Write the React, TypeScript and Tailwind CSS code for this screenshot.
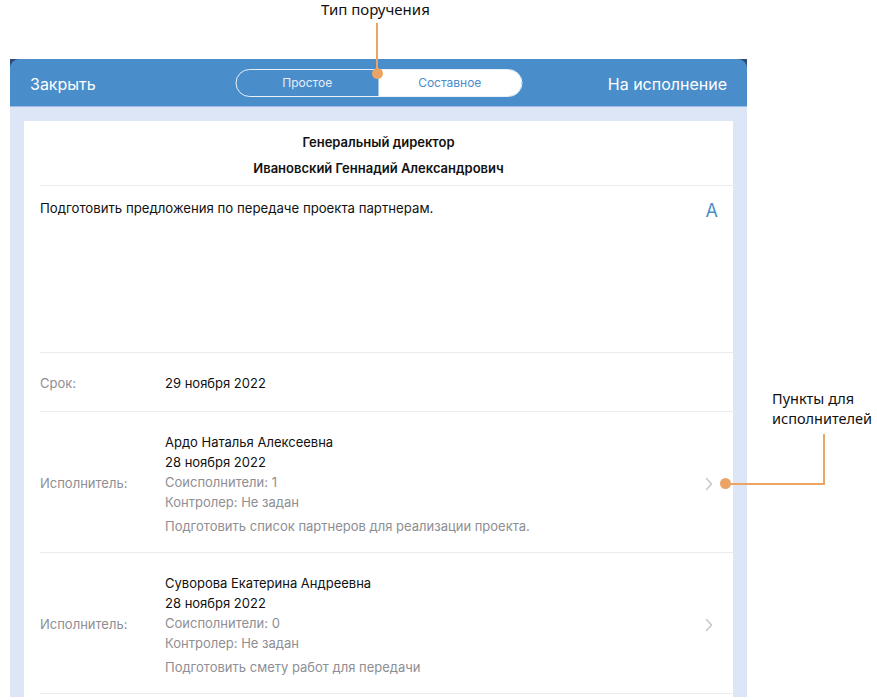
import React from "react";

const ui = "font-['Inter','Liberation_Sans',sans-serif]";
const note = "font-['Noto_Sans','Open_Sans',sans-serif]";

type Executor = {
  name: string;
  date: string;
  co: number;
  desc: string;
};

const executors: Executor[] = [
  {
    name: "Ардо Наталья Алексеевна",
    date: "28 ноября 2022",
    co: 1,
    desc: "Подготовить список партнеров для реализации проекта.",
  },
  {
    name: "Суворова Екатерина Андреевна",
    date: "28 ноября 2022",
    co: 0,
    desc: "Подготовить смету работ для передачи",
  },
];

function Chevron() {
  return (
    <svg width="8" height="14" viewBox="0 0 8 14" className="shrink-0">
      <path d="M1.5 1.5 L6.5 7 L1.5 12.5" fill="none" stroke="#c7c7cc" strokeWidth="1.5" strokeLinecap="round" strokeLinejoin="round" />
    </svg>
  );
}

function ExecutorRow({ ex }: { ex: Executor }) {
  return (
    <div className="flex items-center border-b border-[#ebebef] pt-[20px] pb-[16px] pr-[20px]">
      <div className="w-[125px] shrink-0 text-[13px] text-[#8e8e93]">Исполнитель:</div>
      <div className="flex-1 text-[13px] leading-[20px]">
        <div className="text-[#111]">{ex.name}</div>
        <div className="text-[#111]">{ex.date}</div>
        <div className="text-[#8e8e93]">Соисполнители: {ex.co}</div>
        <div className="text-[#8e8e93]">Контролер: Не задан</div>
        <div className="mt-[4px] text-[#8e8e93]">{ex.desc}</div>
      </div>
      <Chevron />
    </div>
  );
}

export default function App() {
  return (
    <div className={`relative h-[700px] w-[877px] overflow-hidden bg-white ${ui}`}>
      {/* Frame */}
      <div className="ml-[10px] mt-[59px] flex h-[638px] w-[737px] flex-col bg-[#2d4b73]">
        {/* Header */}
        <div className="relative flex h-[48px] shrink-0 items-center justify-between rounded-t-[9px] border-b border-[#9fbde6] bg-[#4a8dcb] px-[20px] pt-[3px] text-[16px] text-white">
          <span>Закрыть</span>
          <div className="absolute left-1/2 top-[10px] flex h-[28px] w-[287px] -translate-x-1/2 overflow-hidden rounded-full border border-[#e8f0fa] text-[12px]">
            <div className="flex flex-1 items-center justify-center text-[#e6eef8]">Простое</div>
            <div className="flex flex-1 items-center justify-center bg-white text-[#4a8dcb]">Составное</div>
          </div>
          <span>На исполнение</span>
        </div>

        {/* Body */}
        <div className="flex flex-1 flex-col bg-[#dde6f7] px-[14px] pt-[14px]">
          <div className="flex-1 bg-white pl-[16px]">
            {/* Title */}
            <div className="border-b border-[#ebebef] pt-[12px] pb-[8px] pr-[16px] text-center text-[13px] font-semibold leading-[18px] text-[#111]">
              <div>Генеральный директор</div>
              <div className="mt-[8px]">Ивановский Геннадий Александрович</div>
            </div>

            {/* Text */}
            <div className="flex h-[167px] items-start justify-between border-b border-[#ebebef] pr-[15px] pt-[13px]">
              <span className="text-[13.2px] leading-[18px] text-[#111]">
                Подготовить предложения по передаче проекта партнерам.
              </span>
              <span className="text-[18px] leading-[24px] text-[#4a8dcb]">A</span>
            </div>

            {/* Deadline */}
            <div className="flex h-[59px] items-center border-b border-[#ebebef] pt-[3px] text-[13px]">
              <div className="w-[125px] text-[#8e8e93]">Срок:</div>
              <div className="text-[#111]">29 ноября 2022</div>
            </div>

            {executors.map((ex) => (
              <ExecutorRow key={ex.name} ex={ex} />
            ))}
          </div>
        </div>
      </div>

      {/* Callout: type */}
      <div className={`absolute left-[321px] top-0 text-[15px] leading-[18px] text-[#111] ${note}`}>
        Тип поручения
      </div>
      <div className="absolute left-[376px] top-[23px] h-[51px] w-[2px] bg-[#eca465]" />
      <div className="absolute left-[372px] top-[68px] h-[11px] w-[11px] rounded-full bg-[#eca465]" />

      {/* Callout: executors */}
      <div className={`absolute left-[772px] top-[388px] text-[14.5px] leading-[20px] text-[#111] ${note}`}>
        <div>Пункты для</div>
        <div>исполнителей</div>
      </div>
      <div className="absolute left-[823px] top-[434px] h-[51px] w-[2px] bg-[#eca465]" />
      <div className="absolute left-[726px] top-[483px] h-[2px] w-[99px] bg-[#eca465]" />
      <div className="absolute left-[720px] top-[478px] h-[11px] w-[11px] rounded-full bg-[#eca465]" />
    </div>
  );
}
